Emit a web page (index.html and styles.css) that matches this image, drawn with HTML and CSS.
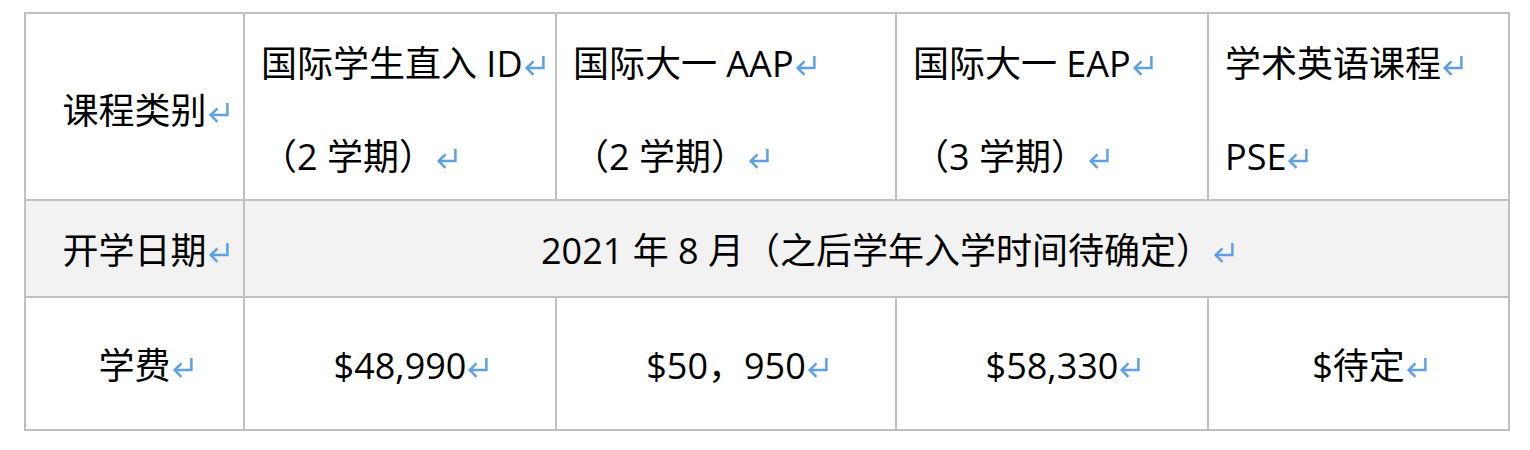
FILE: index.html
```html
<!DOCTYPE html>
<html lang="zh-CN">
<head>
<meta charset="utf-8">
<title>课程表</title>
<link rel="stylesheet" href="styles.css">
</head>
<body>
<div class="page">
  <table class="fees">
    <colgroup>
      <col class="c1"><col class="c2"><col class="c3"><col class="c4"><col class="c5">
    </colgroup>
    <tbody>
      <tr class="r1">
        <td class="center"><p>课程类别<span class="ret"><svg viewBox="0 0 22 22"><path d="M19.5 2V13.5H3.5M10 7L3.5 13.5L10 20"/></svg></span></p></td>
        <td><p>国际学生直入 ID<span class="ret"><svg viewBox="0 0 22 22"><path d="M19.5 2V13.5H3.5M10 7L3.5 13.5L10 20"/></svg></span></p><p>（2 学期）<span class="ret"><svg viewBox="0 0 22 22"><path d="M19.5 2V13.5H3.5M10 7L3.5 13.5L10 20"/></svg></span></p></td>
        <td><p>国际大一 AAP<span class="ret"><svg viewBox="0 0 22 22"><path d="M19.5 2V13.5H3.5M10 7L3.5 13.5L10 20"/></svg></span></p><p>（2 学期）<span class="ret"><svg viewBox="0 0 22 22"><path d="M19.5 2V13.5H3.5M10 7L3.5 13.5L10 20"/></svg></span></p></td>
        <td><p>国际大一 EAP<span class="ret"><svg viewBox="0 0 22 22"><path d="M19.5 2V13.5H3.5M10 7L3.5 13.5L10 20"/></svg></span></p><p>（3 学期）<span class="ret"><svg viewBox="0 0 22 22"><path d="M19.5 2V13.5H3.5M10 7L3.5 13.5L10 20"/></svg></span></p></td>
        <td><p>学术英语课程<span class="ret"><svg viewBox="0 0 22 22"><path d="M19.5 2V13.5H3.5M10 7L3.5 13.5L10 20"/></svg></span></p><p>PSE<span class="ret"><svg viewBox="0 0 22 22"><path d="M19.5 2V13.5H3.5M10 7L3.5 13.5L10 20"/></svg></span></p></td>
      </tr>
      <tr class="r2">
        <td class="center"><p>开学日期<span class="ret"><svg viewBox="0 0 22 22"><path d="M19.5 2V13.5H3.5M10 7L3.5 13.5L10 20"/></svg></span></p></td>
        <td class="center" colspan="4"><p>2021 年 8 月（之后学年入学时间待确定）<span class="ret"><svg viewBox="0 0 22 22"><path d="M19.5 2V13.5H3.5M10 7L3.5 13.5L10 20"/></svg></span></p></td>
      </tr>
      <tr class="r3">
        <td class="center"><p>学费<span class="ret"><svg viewBox="0 0 22 22"><path d="M19.5 2V13.5H3.5M10 7L3.5 13.5L10 20"/></svg></span></p></td>
        <td class="center"><p>$48,990<span class="ret"><svg viewBox="0 0 22 22"><path d="M19.5 2V13.5H3.5M10 7L3.5 13.5L10 20"/></svg></span></p></td>
        <td class="center"><p>$50，950<span class="ret"><svg viewBox="0 0 22 22"><path d="M19.5 2V13.5H3.5M10 7L3.5 13.5L10 20"/></svg></span></p></td>
        <td class="center"><p>$58,330<span class="ret"><svg viewBox="0 0 22 22"><path d="M19.5 2V13.5H3.5M10 7L3.5 13.5L10 20"/></svg></span></p></td>
        <td class="center"><p>$待定<span class="ret"><svg viewBox="0 0 22 22"><path d="M19.5 2V13.5H3.5M10 7L3.5 13.5L10 20"/></svg></span></p></td>
      </tr>
    </tbody>
  </table>
</div>
</body>
</html>
```

FILE: styles.css
```css
html, body {
  margin: 0;
  padding: 0;
  background: #ffffff;
}

.page {
  padding: 12px 0 0 24px;
}

.fees {
  border-collapse: collapse;
  table-layout: fixed;
  width: 1486px;
  font-family: "Open Sans", "Noto Sans CJK SC", sans-serif;
  font-size: 36px;
  color: #000000;
}

.c1 { width: 219px; }
.c2 { width: 312px; }
.c3 { width: 340px; }
.c4 { width: 312px; }
.c5 { width: 301px; }

.fees td {
  border: 2px solid #c0c0c0;
  padding: 4px 16px 0 16px;
  vertical-align: middle;
  text-align: left;
  white-space: nowrap;
  box-sizing: border-box;
}

.fees td.center {
  text-align: center;
}

.fees p {
  margin: 0;
  line-height: 47px;
}

.fees p + p {
  margin-top: 46px;
}

.r1 td {
  height: 187px;
  padding-top: 7px;
}

.r2 td {
  height: 97px;
  background: #f2f2f2;
}

.r3 td {
  height: 133px;
}

.ret {
  display: inline-block;
  width: 0;
  height: 22px;
  vertical-align: 1px;
  overflow: visible;
}

.ret svg {
  display: block;
  width: 23px;
  height: 23px;
  margin-left: 0;
  fill: none;
  stroke: #5e9fe6;
  stroke-width: 2.4;
}
```
